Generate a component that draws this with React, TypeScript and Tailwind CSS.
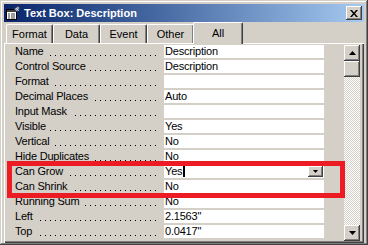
import React from 'react';

const raised =
  'bg-[#d4d0c8] shadow-[inset_-1px_-1px_#404040,inset_1px_1px_#ffffff,inset_-2px_-2px_#808080,inset_2px_2px_#d4d0c8]';

const rows: [string, string][] = [
  ['Name', 'Description'],
  ['Control Source', 'Description'],
  ['Format', ''],
  ['Decimal Places', 'Auto'],
  ['Input Mask', ''],
  ['Visible', 'Yes'],
  ['Vertical', 'No'],
  ['Hide Duplicates', 'No'],
  ['Can Grow', 'Yes'],
  ['Can Shrink', 'No'],
  ['Running Sum', 'No'],
  ['Left', '2.1563"'],
  ['Top', '0.0417"'],
];

const tabs = ['Format', 'Data', 'Event', 'Other'];

const FormIcon = () => (
  <svg width="16" height="16" viewBox="0 0 16 16" className="shrink-0">
    <rect x="1.5" y="4.5" width="10" height="10" fill="#ffffff" stroke="#000000" />
    <rect x="2" y="5" width="9" height="2" fill="#404040" />
    <path d="M3 9h2M6 9h4M3 11h2M6 11h4M3 13h2M6 13h4" stroke="#404040" strokeWidth="1" />
    <path d="M9 4l4-3 2 2-3 4z" fill="#8c9cb8" stroke="#303848" strokeWidth="0.8" />
    <path d="M11 3l3 3" stroke="#ffffff" strokeWidth="0.6" />
  </svg>
);

const TriangleDown = ({ w = 7 }: { w?: number }) => (
  <svg width={w} height={Math.ceil(w / 2)} viewBox={`0 0 ${w} ${Math.ceil(w / 2)}`}>
    <path d={`M0 0h${w}L${w / 2} ${Math.ceil(w / 2)}z`} fill="#000000" />
  </svg>
);

const TriangleUp = () => (
  <svg width="7" height="4" viewBox="0 0 7 4">
    <path d="M0 4h7L3.5 0z" fill="#000000" />
  </svg>
);

export default function App() {
  return (
    <div
      className="relative w-[368px] h-[245px] overflow-hidden bg-[#d4d0c8] pt-[4px] px-[4px] pb-[2px] font-['Liberation_Sans',Arial,sans-serif] text-[11px] text-black shadow-[inset_-1px_-1px_#404040,inset_1px_1px_#d4d0c8,inset_-2px_-2px_#808080,inset_2px_2px_#ffffff]"
    >
      {/* title bar */}
      <div className="flex h-[18px] items-center bg-gradient-to-r from-[#0a246a] to-[#a6caf0] pl-[1px] pr-[2px]">
        <FormIcon />
        <span className="ml-[3px] font-bold text-white leading-none">Text Box: Description</span>
        <div className={`ml-auto flex h-[14px] w-[16px] items-center justify-center ${raised}`}>
          <svg width="8" height="7" viewBox="0 0 8 7">
            <path d="M0 0h2l2 2.5L6 0h2L5 3.5 8 7H6L4 4.5 2 7H0l3-3.5z" fill="#000000" />
          </svg>
        </div>
      </div>

      {/* tabs */}
      <div className="flex h-[21px] items-end pl-[2px]">
        {tabs.map((t) => (
          <div
            key={t}
            className="flex h-[19px] w-[47px] items-center justify-center rounded-t-[2px] border-l border-t border-white border-r border-r-[#404040] shadow-[inset_-1px_0_#808080]"
          >
            {t}
          </div>
        ))}
        <div className="relative z-10 -mb-px -ml-[1px] flex h-[22px] w-[50px] items-center justify-center rounded-t-[2px] border-l border-t border-white border-r border-r-[#404040] bg-[#d4d0c8] shadow-[inset_-1px_0_#808080]">
          All
        </div>
      </div>

      {/* panel */}
      <div className="flex h-[200px] pl-[1px] pt-[2px] pr-[2px] pb-[2px] shadow-[inset_1px_1px_#ffffff,inset_-1px_-1px_#404040,inset_-2px_-2px_#808080]">
        <div className="flex w-[339px] flex-col">
          {rows.map(([label, value]) => (
            <div key={label} className="flex h-[15px]">
              <div className="flex h-[13px] w-[159px] pl-[10px] pr-[8px] leading-[13px]">
                <span className="whitespace-nowrap tracking-[-0.2px]">{label}</span>
                <span className="ml-[4px] mt-[10px] h-[1px] flex-1 bg-[repeating-linear-gradient(to_left,#000000_0_1px,transparent_1px_5px)]" />
              </div>
              <div className="flex h-[13px] w-[160px] items-center bg-white pl-[1px] leading-[13px]">
                <span className="whitespace-nowrap tracking-[-0.2px]">{value}</span>
                {label === 'Can Grow' && (
                  <>
                    <span className="ml-[1px] h-[11px] w-[2px] bg-black" />
                    <div className={`ml-auto mr-[1px] flex h-[11px] w-[15px] items-center justify-center ${raised}`}>
                      <TriangleDown w={5} />
                    </div>
                  </>
                )}
              </div>
            </div>
          ))}
        </div>

        {/* scrollbar */}
        <div className="flex h-[196px] w-[16px] flex-col">
          <div className={`flex h-[16px] w-[16px] items-center justify-center ${raised}`}>
            <TriangleUp />
          </div>
          <div className={`h-[16px] w-[16px] ${raised}`} />
          <div className="flex-1 bg-[repeating-conic-gradient(#d4d0c8_0_25%,#ffffff_0_50%)] bg-[length:2px_2px]" />
          <div className={`flex h-[16px] w-[16px] items-center justify-center ${raised}`}>
            <TriangleDown />
          </div>
        </div>
      </div>

      {/* highlight */}
      <div className="absolute left-[7px] top-[161px] h-[37px] w-[338px] border-[5px] border-[#ed1c24]" />
    </div>
  );
}
